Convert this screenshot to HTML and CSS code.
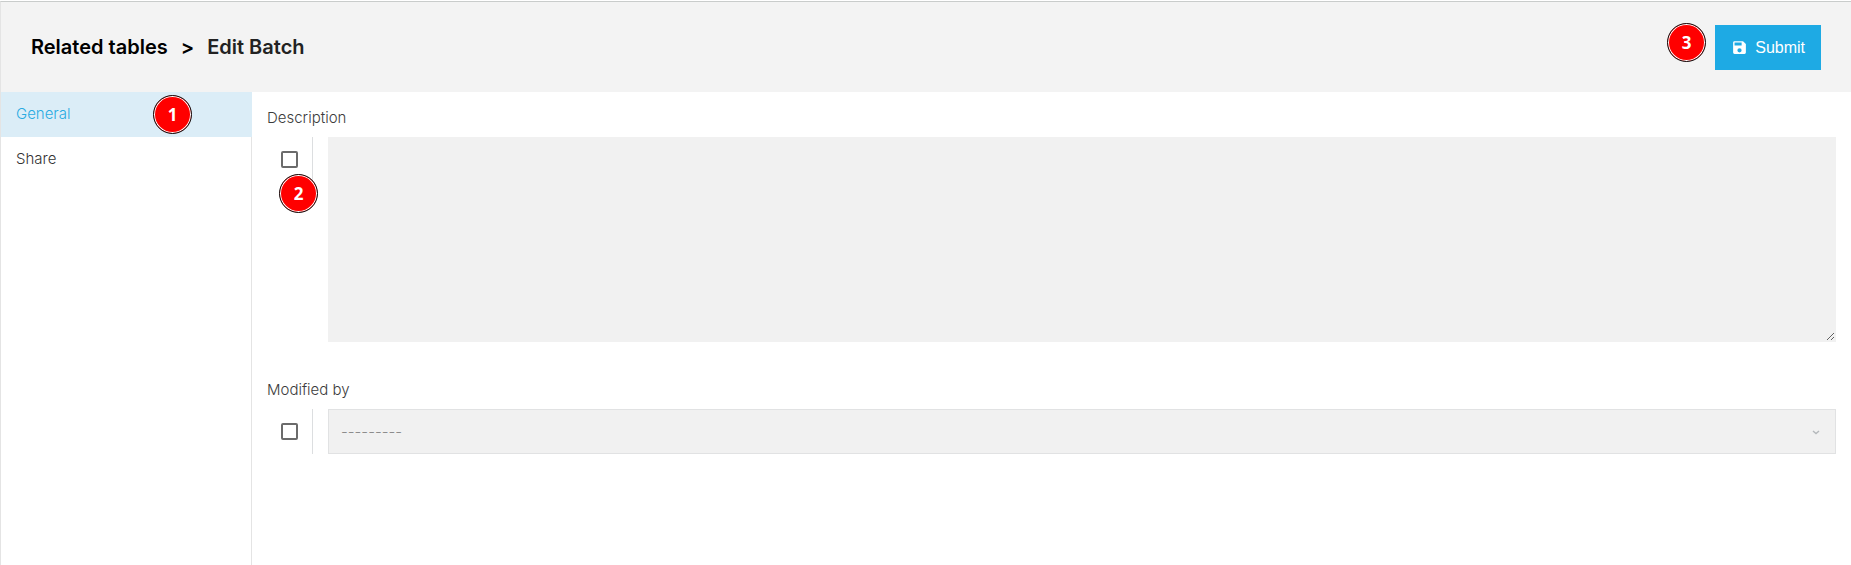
FILE: index.html
```html
<!DOCTYPE html>
<html lang="en">
<head>
<meta charset="utf-8">
<meta name="viewport" content="width=device-width, initial-scale=1">
<title>Edit Batch</title>
<link rel="stylesheet" href="styles.css">
</head>
<body>
<form class="page">
  <header class="header">
    <h1 class="breadcrumb">
      <a class="breadcrumb-link" href="#tables">Related tables</a>
      <span class="breadcrumb-sep">&gt;</span>
      <span>Edit Batch</span>
    </h1>
    <div class="actions">
      <span class="marker marker-submit">3</span>
      <button class="submit" type="submit">
        <svg class="submit-icon" viewBox="0 0 24 24" aria-hidden="true"><path fill="currentColor" d="M17 3H5a2 2 0 0 0-2 2v14a2 2 0 0 0 2 2h14a2 2 0 0 0 2-2V7l-4-4zm-5 16a3 3 0 1 1 0-6 3 3 0 0 1 0 6zm3-10H5V5h10v4z"/></svg>
        <span>Submit</span>
      </button>
    </div>
  </header>
  <div class="body">
    <nav class="sidebar">
      <a class="tab tab-active" href="#general">General<span class="marker marker-tab">1</span></a>
      <a class="tab" href="#share">Share</a>
    </nav>
    <main class="content">
      <div class="field">
        <label class="label" for="description">Description</label>
        <div class="row">
          <div class="toggle">
            <input class="check" type="checkbox" aria-label="Edit description">
            <span class="marker marker-check">2</span>
          </div>
          <textarea class="control description" id="description" disabled></textarea>
        </div>
      </div>
      <div class="field">
        <label class="label" for="modified-by">Modified by</label>
        <div class="row">
          <div class="toggle">
            <input class="check" type="checkbox" aria-label="Edit modified by">
          </div>
          <div class="select-wrap">
            <select class="control select" id="modified-by" disabled>
              <option>---------</option>
            </select>
            <svg class="chevron" viewBox="0 0 8 5" aria-hidden="true"><path d="M1 1l3 2.5L7 1" fill="none" stroke="currentColor" stroke-width="1.4"/></svg>
          </div>
        </div>
      </div>
    </main>
  </div>
</form>
</body>
</html>
```
FILE: styles.css
```css
* {
  box-sizing: border-box;
}

body {
  margin: 0;
  background: #fff;
  color: #3c3c3c;
  font-family: Inter, "Liberation Sans", sans-serif;
  font-size: 15px;
  font-weight: 300;
  line-height: 20px;
}

.page {
  display: flex;
  flex-direction: column;
  min-height: 100vh;
  padding-top: 1px;
}

.header {
  display: flex;
  align-items: center;
  justify-content: space-between;
  padding: 23px 30px 22px;
  border-top: 1px solid #c9cccb;
  border-left: 1px solid #e4e4e4;
  background: #f3f3f3;
}

.breadcrumb {
  display: flex;
  gap: 13px;
  margin: 0;
  padding-bottom: 2px;
  color: #222;
  font-size: 20px;
  font-weight: 600;
  line-height: 24px;
}

.breadcrumb-link,
.breadcrumb-sep {
  color: #000;
  text-decoration: none;
}

.actions {
  position: relative;
}

.submit {
  display: flex;
  align-items: center;
  gap: 7px;
  height: 45px;
  padding: 0 16px;
  border: 0;
  background: #1eaae4;
  color: #fff;
  font-family: "Liberation Sans", Arial, sans-serif;
  font-size: 16px;
}

.submit-icon {
  width: 17px;
  height: 17px;
}

.body {
  display: flex;
  flex: 1;
}

.sidebar {
  flex: 0 0 252px;
  border: solid #e4e4e4;
  border-width: 0 1px;
}

.tab {
  display: block;
  position: relative;
  padding: 12px 15px 13px;
  color: #333;
  text-decoration: none;
}

.tab-active {
  margin-right: -1px;
  background: #dbedf7;
  color: #29abe2;
}

.content {
  flex: 1;
  padding: 16px 15px;
}

.field {
  margin-bottom: 38px;
}

.label {
  display: block;
  width: max-content;
  margin-bottom: 9px;
}

.row {
  display: flex;
  align-items: flex-start;
  gap: 15px;
}

.toggle {
  position: relative;
  flex: 0 0 46px;
  padding: 14px;
  border-right: 1px solid #dcdee0;
}

.check {
  display: block;
  appearance: none;
  width: 17px;
  height: 17px;
  margin: 0;
  border: 2px solid #6b6b6b;
  border-radius: 2px;
  background: #fff;
}

.check:checked {
  background: #6b6b6b;
}

.control {
  display: block;
  width: 100%;
  margin: 0;
  border: 1px solid #e1e2e3;
  border-radius: 0;
  background: #f1f1f1;
  color: #8c8c8c;
  font: inherit;
  opacity: 1;
}

.description {
  flex: 1;
  height: 205px;
  padding: 12px;
  border-color: #f1f1f1;
  resize: vertical;
}

.select-wrap {
  position: relative;
  flex: 1;
}

.select {
  appearance: none;
  height: 45px;
  padding: 0 12px;
}

.chevron {
  position: absolute;
  top: 21px;
  right: 16px;
  width: 8px;
  height: 5px;
  color: #b4b8bb;
}

.marker {
  display: flex;
  position: absolute;
  align-items: center;
  justify-content: center;
  width: 39px;
  height: 39px;
  border: 1px solid #111;
  border-radius: 50%;
  background: #f00;
  box-shadow: inset 0 0 0 1px #fff;
  color: #fff;
  font-family: "Open Sans", sans-serif;
  font-size: 17px;
  font-weight: 700;
}

.marker-tab {
  top: 3px;
  left: 152px;
}

.marker-check {
  top: 37px;
  left: 12px;
}

.marker-submit {
  top: -2px;
  right: 115px;
}
```
